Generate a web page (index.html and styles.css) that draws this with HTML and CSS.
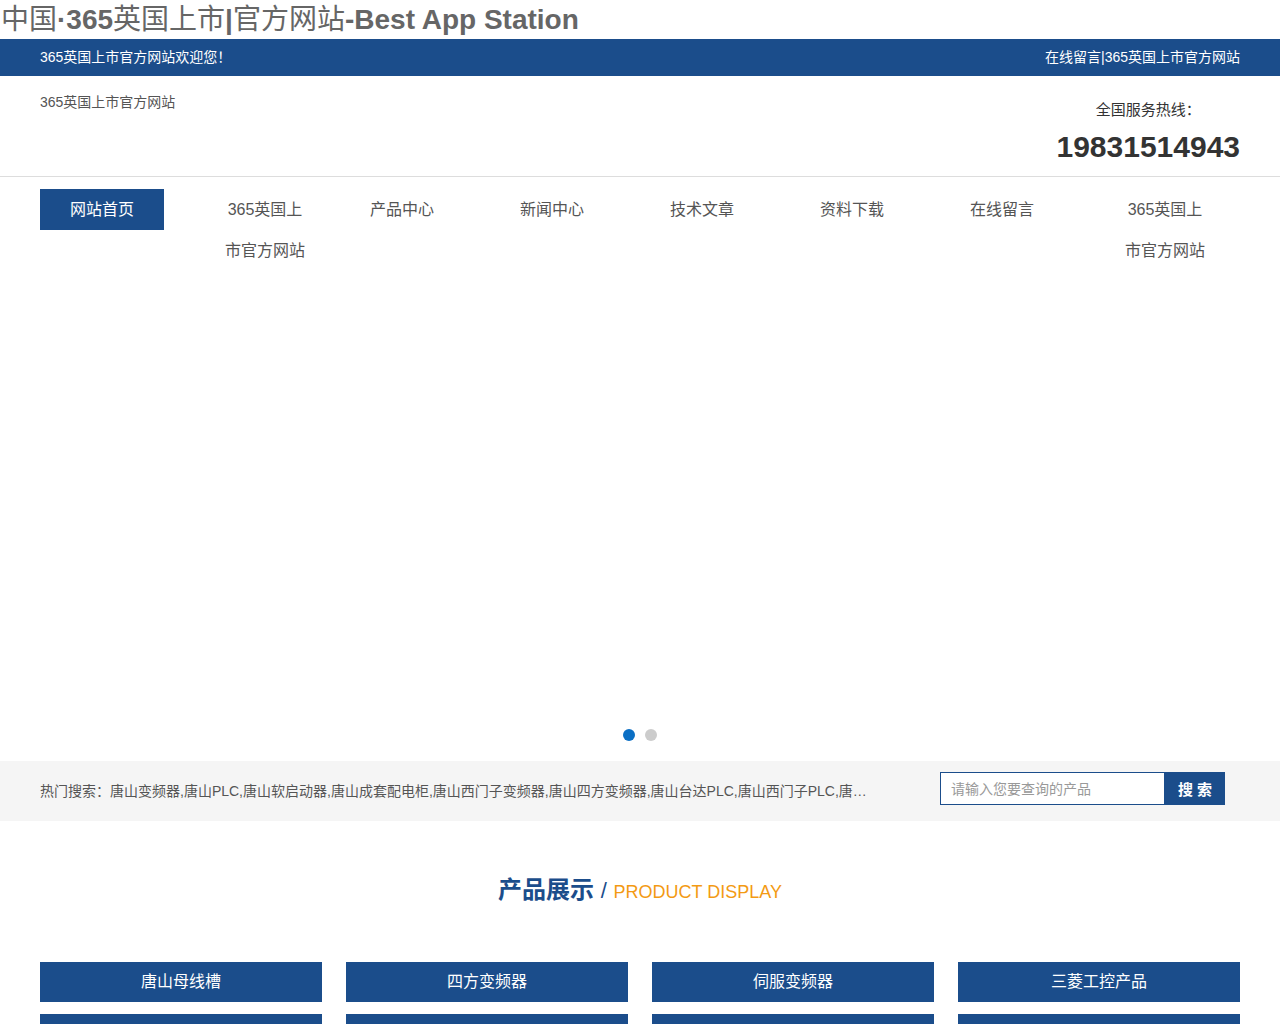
FILE: index.html
```html
<!DOCTYPE html>
<html lang="zh-CN">
<head>
<meta charset="utf-8">
<title>中国·365英国上市|官方网站-Best App Station</title>
<link rel="stylesheet" href="styles.css">
</head>
<body>
<h1 class="site-title"><span class="cjk">中国</span>·365<span class="cjk">英国上市</span>|<span class="cjk">官方网站</span>-Best App Station</h1>

<div class="topbar">
  <div class="wrap topbar-inner">
    <span>365英国上市官方网站欢迎您！</span>
    <span><a href="#">在线留言</a>|<a href="#">365英国上市官方网站</a></span>
  </div>
</div>

<header class="header">
  <div class="wrap header-inner">
    <div class="logo-text">365英国上市官方网站</div>
    <div class="hotline">
      <div class="hotline-label">全国服务热线：</div>
      <div class="hotline-num">19831514943</div>
    </div>
  </div>
</header>

<nav class="wrap nav">
  <ul class="nav-list">
    <li><a class="active" href="#">网站首页</a></li>
    <li><a href="#">365英国上市官方网站</a></li>
    <li><a href="#">产品中心</a></li>
    <li><a href="#">新闻中心</a></li>
    <li><a href="#">技术文章</a></li>
    <li><a href="#">资料下载</a></li>
    <li><a href="#">在线留言</a></li>
    <li><a href="#">365英国上市官方网站</a></li>
  </ul>
</nav>

<section class="banner">
  <div class="banner-dots">
    <span class="dot on"></span>
    <span class="dot"></span>
  </div>
</section>

<div class="hotbar">
  <div class="wrap hotbar-inner">
    <p class="hot-words">热门搜索：唐山变频器,唐山PLC,唐山软启动器,唐山成套配电柜,唐山西门子变频器,唐山四方变频器,唐山台达PLC,唐山西门子PLC,唐山三菱PLC,唐山伺服电机</p>
    <form class="search" action="#">
      <input class="search-input" type="text" placeholder="请输入您要查询的产品">
      <button class="search-btn" type="button">搜 索</button>
    </form>
  </div>
</div>

<section class="products wrap">
  <h2 class="sec-title"><span class="cn">产品展示</span> <span class="slash">/</span> <span class="en">PRODUCT DISPLAY</span></h2>
  <ul class="prod-grid">
    <li><a href="#">唐山母线槽</a></li>
    <li><a href="#">四方变频器</a></li>
    <li><a href="#">伺服变频器</a></li>
    <li><a href="#">三菱工控产品</a></li>
    <li><a href="#">西门子变频器</a></li>
    <li><a href="#">台达PLC</a></li>
    <li><a href="#">软启动器</a></li>
    <li><a href="#">成套配电柜</a></li>
  </ul>
</section>
</body>
</html>
```

FILE: styles.css
```css
* { box-sizing: border-box; }

body {
  margin: 0;
  font-family: "Liberation Sans", "Noto Sans CJK SC", sans-serif;
  color: #333;
  background: #fff;
  text-spacing-trim: space-all;
}

a { color: inherit; text-decoration: none; }
ul { list-style: none; margin: 0; padding: 0; }

.wrap {
  width: 1200px;
  margin: 0 auto;
}

/* site name line */
.site-title {
  margin: 0;
  padding-left: 1px;
  height: 39px;
  line-height: 39px;
  font-size: 28px;
  font-weight: bold;
  color: #666;
  white-space: nowrap;
}
.site-title .cjk { font-weight: normal; }

/* blue welcome strip */
.topbar {
  background: #1b4d8b;
  color: #fff;
  height: 37px;
  line-height: 37px;
  font-size: 14px;
}
.topbar-inner {
  display: flex;
  justify-content: space-between;
}

/* logo + hotline */
.header {
  height: 101px;
  border-bottom: 1px solid #ddd;
}
.header-inner {
  display: flex;
  justify-content: space-between;
  align-items: flex-start;
}
.logo-text {
  padding-top: 16px;
  line-height: 20px;
  font-size: 14px;
  color: #555;
}
.hotline {
  padding-top: 24px;
  text-align: center;
}
.hotline-label {
  line-height: 20px;
  font-size: 15px;
  color: #333;
}
.hotline-num {
  margin-top: 9px;
  line-height: 36px;
  font-size: 30px;
  font-weight: bold;
  color: #333;
}

/* main menu */
.nav {
  margin-top: 12px;
}
.nav-list {
  display: grid;
  grid-template-columns: repeat(8, 150px);
}
.nav-list a {
  display: inline-block;
  max-width: 150px;
  padding: 0 30px;
  line-height: 41px;
  font-size: 16px;
  color: #555;
  text-align: center;
}
.nav-list a.active {
  background: #1b4d8b;
  color: #fff;
}

/* slideshow */
.banner {
  position: relative;
  height: 490px;
  background: #fff;
}
.banner-dots {
  position: absolute;
  left: 0;
  right: 0;
  bottom: 20px;
  display: flex;
  justify-content: center;
  gap: 10px;
}
.dot {
  width: 12px;
  height: 12px;
  border-radius: 50%;
  background: #ccc;
}
.dot.on { background: #0b6fc4; }

/* hot keywords + search */
.hotbar {
  background: #f5f5f5;
  height: 60px;
}
.hotbar-inner {
  height: 60px;
  display: flex;
  align-items: flex-start;
  justify-content: space-between;
}
.hot-words {
  margin: 20px 0 0;
  width: 830px;
  line-height: 20px;
  font-size: 14px;
  color: #555;
  white-space: nowrap;
  overflow: hidden;
  text-overflow: ellipsis;
}
.search {
  display: flex;
  margin: 11px 15px 0 0;
  height: 33px;
}
.search-input {
  width: 225px;
  height: 33px;
  border: 1px solid #1b4d8b;
  padding: 0 10px;
  font-family: inherit;
  font-size: 14px;
  color: #333;
  outline: none;
}
.search-input::placeholder { color: #999; }
.search-btn {
  width: 60px;
  height: 33px;
  border: 0;
  background: #1b4d8b;
  color: #fff;
  font-family: inherit;
  font-size: 15px;
  font-weight: bold;
  padding: 0;
}

/* products */
.sec-title {
  margin: 49px 0 50px;
  line-height: 40px;
  text-align: center;
  font-weight: normal;
}
.sec-title .cn {
  font-size: 24px;
  font-weight: bold;
  color: #1b4d8b;
}
.sec-title .slash {
  font-size: 22px;
  color: #1b4d8b;
}
.sec-title .en {
  font-size: 18px;
  color: #f39a14;
}
.prod-grid {
  display: grid;
  grid-template-columns: repeat(4, 282px);
  column-gap: 24px;
  row-gap: 12px;
}
.prod-grid a {
  display: block;
  height: 40px;
  line-height: 40px;
  background: #1b4d8b;
  color: #fff;
  text-align: center;
  font-size: 16px;
}
```
